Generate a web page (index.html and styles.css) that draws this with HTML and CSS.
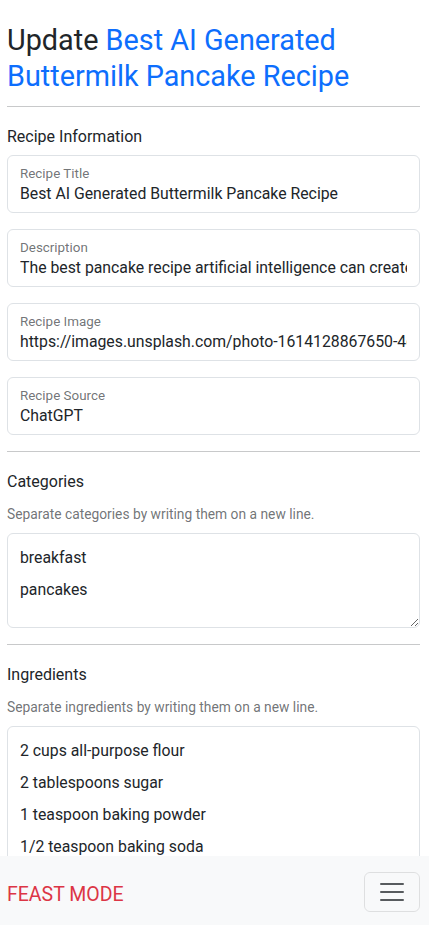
FILE: index.html
```html
<!DOCTYPE html>
<html lang="en">
<head>
<meta charset="utf-8">
<title>Update Recipe</title>
<link rel="stylesheet" href="styles.css">
</head>
<body>
<main class="page">
  <h1 class="title">Update <span class="link">Best AI Generated Buttermilk Pancake Recipe</span></h1>
  <hr class="rule">
  <p class="section-title">Recipe Information</p>
  <div class="field">
    <label class="field-label" for="t">Recipe Title</label>
    <input class="field-input" id="t" type="text" value="Best AI Generated Buttermilk Pancake Recipe">
  </div>
  <div class="field">
    <label class="field-label" for="d">Description</label>
    <input class="field-input" id="d" type="text" value="The best pancake recipe artificial intelligence can create.">
  </div>
  <div class="field">
    <label class="field-label" for="i">Recipe Image</label>
    <input class="field-input" id="i" type="text" value="https://images.unsplash.com/photo-1614128867650-4c1c2e8f1a1b">
  </div>
  <div class="field">
    <label class="field-label" for="s">Recipe Source</label>
    <input class="field-input" id="s" type="text" value="ChatGPT">
  </div>
  <hr class="rule">
  <p class="section-title">Categories</p>
  <p class="help">Separate categories by writing them on a new line.</p>
  <textarea class="area area-short">breakfast
pancakes</textarea>
  <hr class="rule">
  <p class="section-title">Ingredients</p>
  <p class="help">Separate ingredients by writing them on a new line.</p>
  <textarea class="area area-tall">2 cups all-purpose flour
2 tablespoons sugar
1 teaspoon baking powder
1/2 teaspoon baking soda
1/2 teaspoon salt
2 cups buttermilk
2 large eggs
1/4 cup unsalted butter, melted</textarea>
</main>
<nav class="navbar">
  <span class="brand">FEAST MODE</span>
  <button class="toggler" type="button" aria-label="Toggle navigation">
    <svg class="toggler-icon" width="30" height="30" viewBox="0 0 30 30"><path d="M4 7h22M4 15h22M4 23h22" stroke="rgba(33,37,41,0.75)" stroke-width="2" stroke-linecap="round" fill="none"/></svg>
  </button>
</nav>
</body>
</html>
```
FILE: styles.css
```css
* { box-sizing: border-box; }
html, body { margin: 0; padding: 0; }
body {
  font-family: Roboto, "Liberation Sans", sans-serif;
  color: #212529;
  background: #fff;
  font-size: 16px;
  line-height: 1.5;
}
.page {
  padding: 22px 9px 120px 7px;
}
.title {
  font-size: 28.8px;
  line-height: 36px;
  font-weight: 400;
  margin: 0;
}
.link { color: #0d6efd; }
.rule {
  border: 0;
  border-top: 1px solid #c8c9ca;
  margin: 12px 0 18px 0;
  height: 0;
}
.section-title {
  margin: 0 0 6px 0;
  font-size: 16px;
  line-height: 24px;
}
.help {
  margin: 10px 0 8px 0;
  font-size: 13.8px;
  line-height: 21px;
  color: rgba(33,37,41,0.65);
}
.field {
  border: 1px solid #dee2e6;
  border-radius: 6px;
  height: 58px;
  padding: 9px 12px 0 12px;
  margin-bottom: 16px;
  overflow: hidden;
}
.field-label {
  display: block;
  font-size: 13.4px;
  line-height: 17px;
  color: rgba(33,37,41,0.65);
}
.field-input {
  display: block;
  width: 100%;
  border: 0;
  padding: 0;
  margin: 0;
  font: inherit;
  font-size: 15.8px;
  line-height: 24px;
  height: 24px;
  color: #212529;
  background: transparent;
  outline: none;
}
.area {
  display: block;
  width: 100%;
  border: 1px solid #dee2e6;
  border-radius: 6px;
  font: inherit;
  font-size: 15.8px;
  line-height: 32px;
  padding: 8px 12px 6px 12px;
  color: #212529;
  resize: vertical;
  margin: 0 0 16px 0;
  outline: none;
  overflow: hidden;
}
.area-short { height: 95px; }
.area-tall { height: 290px; }
.navbar {
  position: fixed;
  left: 0; right: 0; bottom: 0;
  height: 69px;
  background: #f8f9fa;
  display: flex;
  align-items: flex-start;
  justify-content: space-between;
  padding: 16px 9px 0 7px;
}
.brand {
  color: #dc3545;
  font-size: 19.5px;
  line-height: 30px;
  margin-top: 8px;
}
.toggler {
  width: 56px;
  height: 40px;
  padding: 4px 12px;
  border: 1px solid rgba(0,0,0,0.1);
  border-radius: 6px;
  background: transparent;
  display: flex;
  align-items: center;
  justify-content: center;
}
.toggler-icon { display: block; }
```
